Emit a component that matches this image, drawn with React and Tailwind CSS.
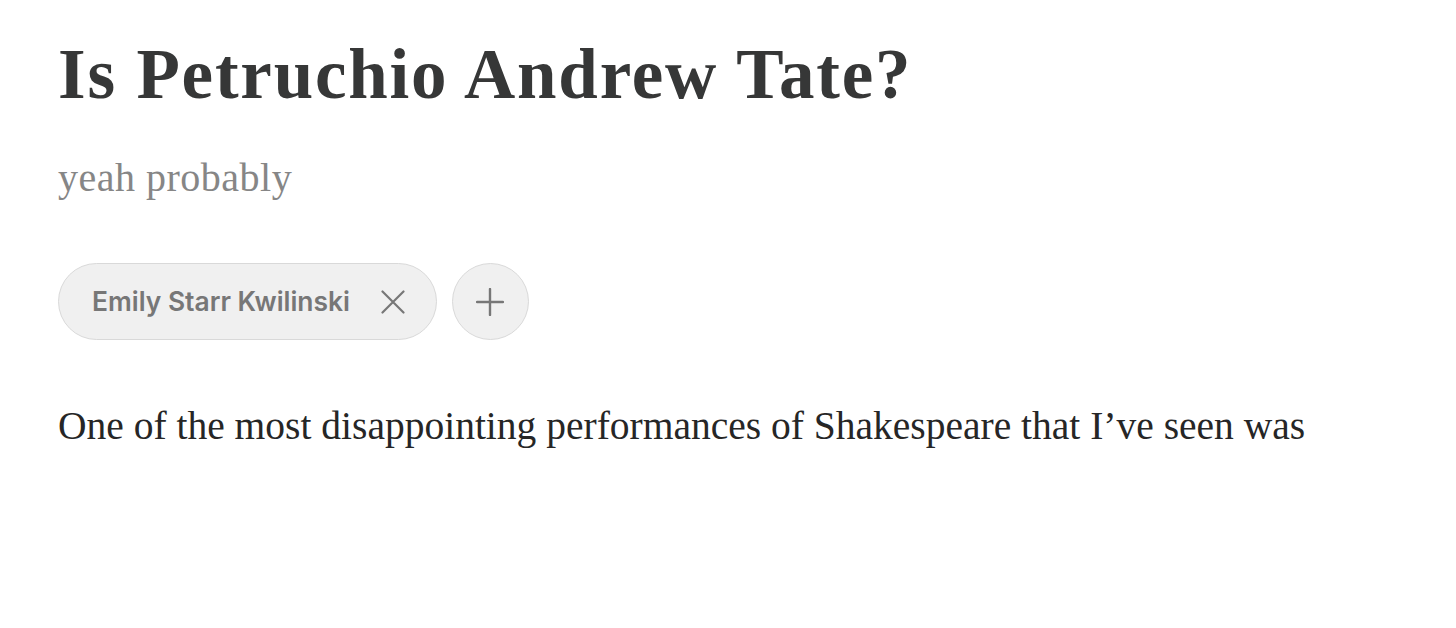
export default function App() {
  return (
    <div className="w-[1456px] h-[628px] bg-white overflow-hidden">
      <div className="pl-[58px] pt-[32px]">
        <h1 className="text-[71px] leading-[85px] font-bold text-[#363737] tracking-[1.8px]" style={{ fontFamily: '"Liberation Serif", serif' }}>
          Is Petruchio Andrew Tate?
        </h1>
        <p className="mt-[37px] text-[40px] leading-[48px] text-[#868686] tracking-[0.5px]" style={{ fontFamily: '"Liberation Serif", serif' }}>
          yeah probably
        </p>
        <div className="mt-[61px] flex items-center gap-[15px]">
          <div className="h-[77px] pl-[33px] pr-[31px] flex items-center rounded-full bg-[#f0f0f0] border-[1.5px] border-[#d9d9d9]">
            <span className="text-[26.4px] font-semibold text-[#777777]" style={{ fontFamily: 'Inter, sans-serif' }}>Emily Starr Kwilinski</span>
            <svg className="ml-[31px]" width="24" height="24" viewBox="0 0 24 24" fill="none" stroke="#777" strokeWidth="2.2" strokeLinecap="round">
              <path d="M1.5 1.5L22.5 22.5M22.5 1.5L1.5 22.5" />
            </svg>
          </div>
          <div className="w-[77px] h-[77px] rounded-full bg-[#f0f0f0] border-[1.5px] border-[#d9d9d9] flex items-center justify-center">
            <svg width="28" height="28" viewBox="0 0 28 28" fill="none" stroke="#777" strokeWidth="2.4" strokeLinecap="round">
              <path d="M14 1V27M1 14H27" />
            </svg>
          </div>
        </div>
        <p className="mt-[61px] text-[39.5px] leading-[50px] text-[#262626]" style={{ fontFamily: '"Liberation Serif", serif' }}>
          One of the most disappointing performances of Shakespeare that I’ve seen was
        </p>
      </div>
    </div>
  );
}
